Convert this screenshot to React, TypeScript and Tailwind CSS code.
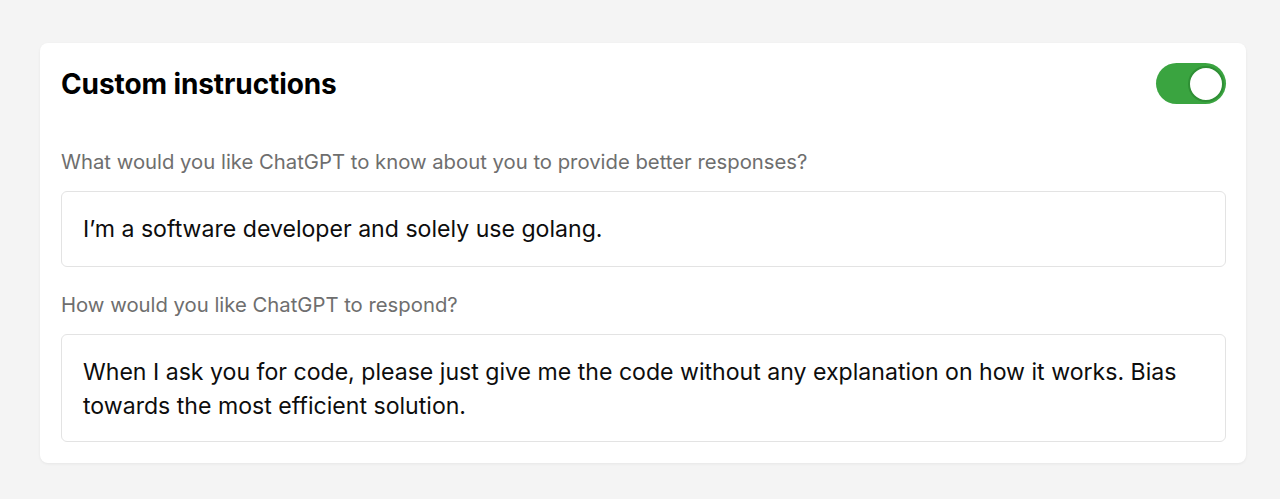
import React, { useState } from 'react';

const App: React.FC = () => {
  const [enabled, setEnabled] = useState(true);

  return (
    <div className="min-h-[499px] w-full bg-[#f4f4f4] pt-[43px] pl-[40px] pr-[34px] font-['Inter',sans-serif]">
      <div className="w-[1206px] bg-white rounded-[8px] shadow-[0_1px_3px_rgba(0,0,0,0.06)] pl-[21px] pr-[20px] pt-[20px] pb-[21px]">
        {/* Header */}
        <div className="flex items-center justify-between h-[41px]">
          <h2 className="text-[28px] font-bold text-black tracking-[-0.1px]">Custom instructions</h2>
          <button
            onClick={() => setEnabled((v) => !v)}
            className={`relative w-[70px] h-[41px] rounded-full transition-colors ${
              enabled ? 'bg-[#3aa440]' : 'bg-[#d9d9d9]'
            }`}
          >
            <span
              className={`absolute top-[2.5px] w-[36px] h-[36px] rounded-full bg-white border-[2px] border-[#2f8f35] transition-all ${
                enabled ? 'left-[32px]' : 'left-[2.5px]'
              }`}
            />
          </button>
        </div>

        {/* Question 1 */}
        <div className="mt-[44px] mb-[15px] text-[20.3px] leading-[28px] text-[#6e6e6e]">
          What would you like ChatGPT to know about you to provide better responses?
        </div>
        <div className="border border-[#e3e3e3] rounded-[6px] px-[21px] py-[20px] text-[23.1px] leading-[34px] text-[#0d0d0d]">
          I’m a software developer and solely use golang.
        </div>

        {/* Question 2 */}
        <div className="mt-[24px] mb-[15px] text-[20.3px] leading-[28px] text-[#6e6e6e]">
          How would you like ChatGPT to respond?
        </div>
        <div className="border border-[#e3e3e3] rounded-[6px] px-[21px] pt-[20px] pb-[18px] text-[23.1px] leading-[34px] text-[#0d0d0d]">
          When I ask you for code, please just give me the code without any explanation on how it works. Bias towards the most efficient solution.
        </div>
      </div>
    </div>
  );
};

export default App;
